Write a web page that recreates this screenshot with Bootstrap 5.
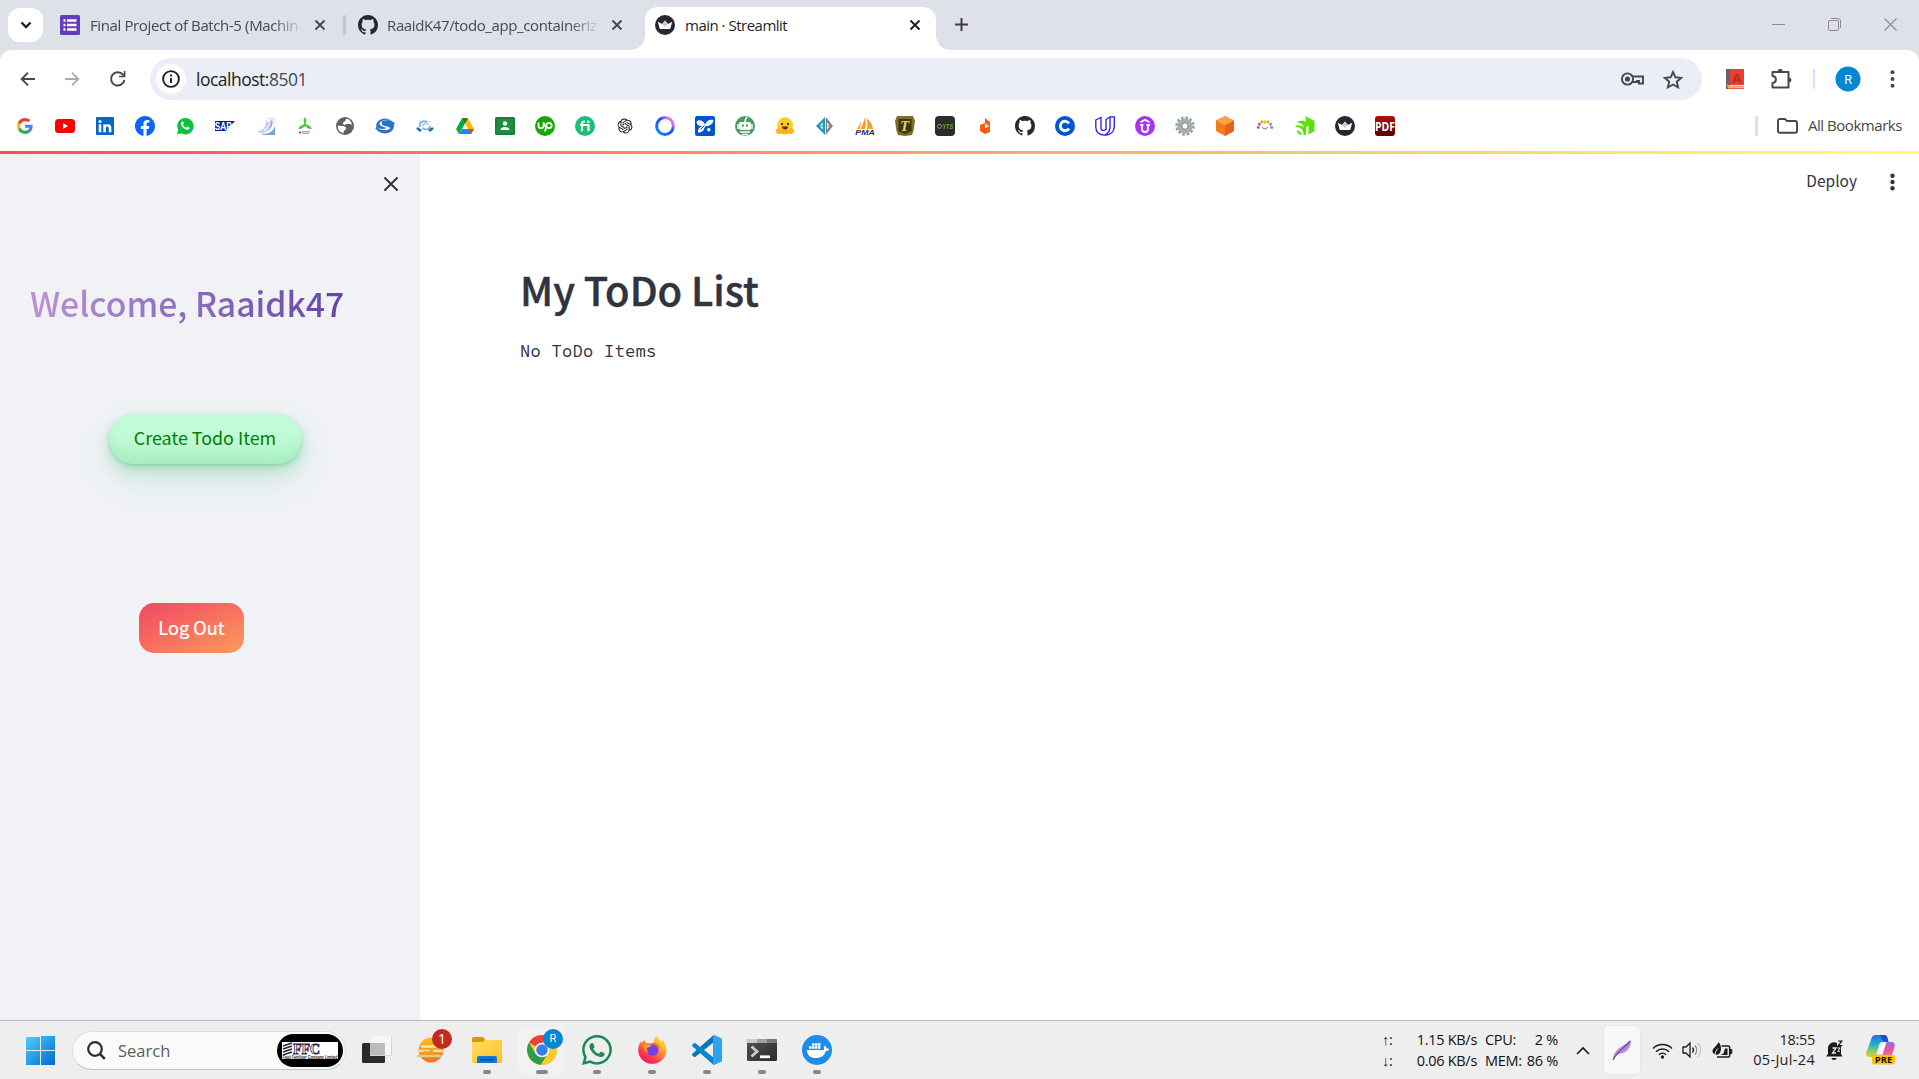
<!DOCTYPE html>
<html lang="en">
<head>
<meta charset="utf-8">
<meta name="viewport" content="width=device-width, initial-scale=1">
<title>main · Streamlit</title>
<link href="https://cdn.jsdelivr.net/npm/bootstrap@5.3.0/dist/css/bootstrap.min.css" rel="stylesheet">
<style>
:root{--ui:"Segoe UI","Open Sans","Noto Sans",sans-serif;--st:"Source Sans Pro","Noto Sans CJK SC",sans-serif}
html,body{height:100%;overflow:hidden}
body{font-family:var(--ui);color:#1f1f1f;background:#fff}
svg{display:block;flex:none;overflow:visible}
.tx{white-space:nowrap;display:block}
.strip{height:50px;background:#dee1e8;padding-left:8px}
.tabmenu{width:35px;height:34px;border-radius:12px}
.btab{height:43px;font-size:15px;letter-spacing:-.5px;color:#45484c}
.btab .tx{line-height:24px}
.tab-name{width:209px;letter-spacing:-.38px}
.fade-end{-webkit-mask-image:linear-gradient(90deg,#000 87%,rgba(0,0,0,.15));mask-image:linear-gradient(90deg,#000 87%,rgba(0,0,0,.15))}
.tab-on{position:relative;background:#fff;border-radius:13px 13px 0 0;color:#1f1f1f;width:291px}
.tab-on::before,.tab-on::after{content:"";position:absolute;bottom:0;width:14px;height:14px}
.tab-on::before{left:-14px;background:radial-gradient(circle at 0 0,transparent 13.5px,#fff 14px)}
.tab-on::after{right:-14px;background:radial-gradient(circle at 100% 0,transparent 13.5px,#fff 14px)}
.tabsep{width:3px;height:20px;background:#c6c7ca;border-radius:2px}
.under{background:#dee1e8}
.tools{height:58px;background:#fff;border-radius:12px 12px 0 0}
.omni{width:1552px;height:42px;border-radius:21px;background:#ebeef7;margin-top:8px;padding-left:6px}
.info{width:30px;height:30px}
.url{font-size:17.5px;line-height:26px;letter-spacing:-.5px}
.port{color:#474747}
.marks{height:43px;padding-left:15px;padding-bottom:7px}
.bm{width:40px}
.allbm{font-size:15px;letter-spacing:-.45px;color:#474747;margin:-2px 17px 0 10px}
.vsep{width:3px;height:20px;background:#d3e3fd;border-radius:2px}
.deco{height:3px;background:linear-gradient(90deg,#ff4b4b,#fffd80)}
.page{height:866px;font-family:var(--st);color:#31333f}
.side{width:420px;background:#f0f2f6}
.welcome{font-size:33.7px;line-height:44px;font-weight:500;background:linear-gradient(90deg,#b993d6,#6345a6);-webkit-background-clip:text;background-clip:text;color:transparent;width:316px}
.make{width:193px;height:50px;border-radius:25px;border:0;color:#008000;font-size:17.9px;background:#c2fbd7;padding:0 0 2px;box-shadow:rgba(44,187,99,.2) 0 -25px 18px -14px inset,rgba(44,187,99,.15) 0 1px 2px,rgba(44,187,99,.15) 0 2px 4px,rgba(44,187,99,.15) 0 4px 8px,rgba(44,187,99,.15) 0 8px 16px,rgba(44,187,99,.15) 0 16px 32px}
.leave{width:105px;height:50px;border-radius:15px;border:0;color:#fff;font-size:18.2px;-webkit-text-stroke:.2px #fff;background:linear-gradient(to bottom right,#ef4765,#ff9a5a)}
.headline{font-size:40px;line-height:52px;font-weight:500;margin:0;letter-spacing:-.05px;-webkit-text-stroke:.45px #31333f}
.mono{font-family:"Source Code Pro","Noto Sans Mono CJK SC","Liberation Mono",monospace;font-size:17px;letter-spacing:.3px;line-height:24px}
.deploy{font-size:15.5px;line-height:24px}
.task{height:59px;background:#eee;border-top:1px solid #b9babc}
.search{width:274px;height:39px;border-radius:20px;background:#fafafa;border:1px solid #dedede;border-bottom-color:#c2c2c2;color:#5c5c5c;font-size:16.5px}
.app{width:55px;height:58px;position:relative}
.app::after{content:"";position:absolute;left:24px;top:49px;width:8px;height:4px;border-radius:2px;background:#868686}
.app.cur::after{left:22px;width:12px}
.app.quiet::after{display:none}
.curbox{position:absolute;left:4px;top:5px;width:47px;height:48px;background:#f2f2f2;border-radius:5px}
.pin{position:absolute;width:20px;height:20px;border-radius:50%;color:#fff;font-size:14px;line-height:20px;text-align:center}
.net{font-size:14.5px;line-height:20.5px;letter-spacing:-.3px;color:#111;padding-top:1px}
.feather{width:38px;height:50px;background:#f8f8f8;border:1px solid #e6e6e6;border-radius:5px}
.clock{font-size:14.5px;line-height:20.5px;color:#222;letter-spacing:-.3px}
.clock .day{letter-spacing:.32px}
</style>
</head>
<body>
<svg width="0" height="0" class="position-absolute"><defs>
<symbol id="x" viewBox="0 0 12 12"><path d="M1.500 1.500l9 9m0-9l-9 9" stroke="currentColor" stroke-width="1.900" fill="none"/></symbol>
<symbol id="gh" viewBox="0 0 16 16"><path fill="#24292f" d="M8 0C3.58 0 0 3.58 0 8c0 3.54 2.29 6.53 5.47 7.59.4.07.55-.17.55-.38 0-.19-.01-.82-.01-1.49-2.01.37-2.53-.49-2.69-.94-.09-.23-.48-.94-.82-1.13-.28-.15-.68-.52-.01-.53.63-.01 1.08.58 1.23.82.72 1.21 1.87.87 2.33.66.07-.52.28-.87.51-1.07-1.78-.2-3.64-.89-3.64-3.95 0-.87.31-1.59.82-2.15-.08-.2-.36-1.02.08-2.12 0 0 .67-.21 2.2.82.64-.18 1.32-.27 2-.27.68 0 1.36.09 2 .27 1.53-1.04 2.2-.82 2.2-.82.44 1.1.16 1.92.08 2.12.51.56.82 1.27.82 2.15 0 3.07-1.87 3.75-3.65 3.95.29.25.54.73.54 1.48 0 1.07-.01 1.93-.01 2.2 0 .21.15.46.55.38A8.012 8.012 0 0 0 16 8c0-4.42-3.58-8-8-8z"/></symbol>
<symbol id="crown" viewBox="0 0 20 20"><circle cx="10" cy="10" r="10" fill="#262730"/><path d="M2.800 6.800l4.300 2.200L10 5.600 12.900 9l4.300-2.200-2 7.200H4.800z" fill="#fff"/><path d="M7.100 9L10 5.600 12.900 9 10 12z" fill="#c9c9cb"/></symbol>
<symbol id="wa" viewBox="0 0 16 16"><path d="M13.601 2.326A7.854 7.854 0 0 0 7.994 0C3.627 0 .068 3.558.064 7.926c0 1.399.366 2.76 1.057 3.965L0 16l4.204-1.102a7.933 7.933 0 0 0 3.79.965h.004c4.368 0 7.926-3.558 7.93-7.93A7.898 7.898 0 0 0 13.6 2.326zM7.994 14.521a6.573 6.573 0 0 1-3.356-.92l-.24-.144-2.494.654.666-2.433-.156-.251a6.56 6.56 0 0 1-1.007-3.505c0-3.626 2.957-6.584 6.591-6.584a6.56 6.56 0 0 1 4.66 1.931 6.557 6.557 0 0 1 1.928 4.66c-.004 3.639-2.961 6.592-6.592 6.592zm3.615-4.934c-.197-.099-1.17-.578-1.353-.646-.182-.065-.315-.099-.445.099-.133.197-.513.646-.627.775-.114.133-.232.148-.43.05-.197-.1-.836-.308-1.592-.985-.59-.525-.985-1.175-1.103-1.372-.114-.198-.011-.304.088-.403.087-.088.197-.232.296-.346.1-.114.133-.198.198-.33.065-.134.034-.248-.015-.347-.05-.099-.445-1.076-.612-1.47-.16-.389-.323-.335-.445-.34-.114-.007-.247-.007-.38-.007a.729.729 0 0 0-.529.247c-.182.198-.691.677-.691 1.654 0 .977.71 1.916.81 2.049.098.133 1.394 2.132 3.383 2.992.47.205.84.326 1.129.418.475.152.904.129 1.246.08.38-.058 1.171-.48 1.338-.943.164-.464.164-.86.114-.992-.049-.133-.182-.198-.38-.298z"/></symbol>
<linearGradient id="win" x1="0" y1="0" x2="1" y2="1"><stop offset="0" stop-color="#4fd0fb"/><stop offset="1" stop-color="#0069cf"/></linearGradient>
<linearGradient id="ring" x1="0" y1="1" x2="1" y2="0"><stop offset="0" stop-color="#0a8cff"/><stop offset=".6" stop-color="#1e4bff"/><stop offset=".8" stop-color="#c77df0"/><stop offset="1" stop-color="#ff6bc5"/></linearGradient>
<linearGradient id="sun" x1="0" y1="0" x2="0" y2="1"><stop offset="0" stop-color="#ffc21a"/><stop offset="1" stop-color="#f07018"/></linearGradient>
<linearGradient id="fold" x1="0" y1="0" x2="1" y2="1"><stop offset="0" stop-color="#ffdc68"/><stop offset="1" stop-color="#fdc223"/></linearGradient>
<linearGradient id="fox" x1=".9" y1="0" x2=".2" y2="1"><stop offset="0" stop-color="#fff04a"/><stop offset=".4" stop-color="#ff9a2a"/><stop offset=".75" stop-color="#ff3850"/><stop offset="1" stop-color="#e3127c"/></linearGradient>
<linearGradient id="term" x1="0" y1="0" x2="1" y2="1"><stop offset="0" stop-color="#525252"/><stop offset="1" stop-color="#2c2c2c"/></linearGradient>
<linearGradient id="shell" x1="0" y1="0" x2="1" y2="0"><stop offset="0" stop-color="#63c5e8"/><stop offset=".6" stop-color="#a9a0dc"/><stop offset="1" stop-color="#2a75c4"/></linearGradient>
<linearGradient id="copA" x1="0" y1="0" x2="0" y2="1"><stop offset="0" stop-color="#1b6fe0"/><stop offset=".45" stop-color="#22b5c8"/><stop offset=".75" stop-color="#8fd05a"/><stop offset="1" stop-color="#f2c22c"/></linearGradient>
<linearGradient id="copB" x1="0" y1="0" x2="0" y2="1"><stop offset="0" stop-color="#a05ff0"/><stop offset=".5" stop-color="#e457a8"/><stop offset="1" stop-color="#ff8a50"/></linearGradient>
<linearGradient id="pdf" x1="0" y1="0" x2="0" y2="1"><stop offset="0" stop-color="#b01010"/><stop offset="1" stop-color="#5e0000"/></linearGradient>
</defs></svg>

<!-- Tab strip -->
<header class="strip d-flex align-items-end">
  <button class="tabmenu btn bg-white border-0 p-0 d-flex align-items-center justify-content-center align-self-start mt-2" aria-label="Search tabs"><svg width="12" height="8" viewBox="0 0 12 8"><path d="M1.500 1.500L6 6l4.500-4.500" fill="none" stroke="#1f1f1f" stroke-width="2.300"/></svg></button>
  <div class="btab d-flex align-items-center pb-2" style="width:283px;padding-left:17px">
    <svg width="20" height="20"><rect width="20" height="20" rx="1.500" fill="#673ab7"/><path d="M3.500 5.500h2M3.500 10h2M3.500 14.500h2M7 5.500h9.500M7 10h9.500M7 14.500h9.500" stroke="#fff" stroke-width="2.400"/></svg>
    <span class="tx tab-name fade-end" style="margin-left:10px">Final Project of Batch-5 (Machin</span>
    <svg width="12" height="12" style="margin-left:15px"><use href="#x"/></svg>
  </div>
  <div class="btab d-flex align-items-center pb-2" style="width:319px;padding-left:17px">
    <i class="tabsep"></i>
    <svg width="20" height="20" style="margin-left:12px"><use href="#gh"/></svg>
    <span class="tx tab-name fade-end" style="margin-left:9px">RaaidK47/todo_app_containeriz</span>
    <svg width="12" height="12" style="margin-left:15px"><use href="#x"/></svg>
  </div>
  <div class="btab tab-on d-flex align-items-center pb-2" style="padding-left:10px">
    <svg width="20" height="20"><use href="#crown"/></svg>
    <span class="tx" style="margin-left:10px">main · Streamlit</span>
    <svg class="ms-auto" width="12" height="12" style="margin-right:15px"><use href="#x"/></svg>
  </div>
  <div class="btab d-flex align-items-center pb-2" style="padding-left:18.500px"><svg width="13" height="13"><path d="M6.500 0v13M0 6.500h13" stroke="#3c3e41" stroke-width="2"/></svg></div>
  <div class="btab d-flex align-items-center pb-2 ms-auto" style="padding-right:21px;gap:43px">
    <svg width="13" height="13"><path d="M0 6.500h13" stroke="#8a8c90"/></svg>
    <svg width="13" height="13"><rect x=".5" y="2.500" width="10" height="10" rx="1.500" fill="none" stroke="#8a8c90"/><path d="M3 .5h7a2.500 2.500 0 0 1 2.500 2.500v7" fill="none" stroke="#8a8c90"/></svg>
    <svg width="14" height="13"><path d="M.5.500l12 12m0-12l-12 12" stroke="#8a8c90" fill="none" stroke-width="1.100"/></svg>
  </div>
</header>

<!-- Address bar -->
<div class="under"><div class="tools d-flex align-items-start">
  <div class="d-flex align-items-center" style="width:150px;height:58px;padding-left:20px">
    <svg width="15" height="14"><path d="M15 7H1.500M8 .700L1.700 7 8 13.300" fill="none" stroke="#46484b" stroke-width="1.900"/></svg>
    <svg width="15" height="14" style="margin-left:30px"><path d="M0 7h13.500M7 .700L13.300 7 7 13.300" fill="none" stroke="#a9abae" stroke-width="1.800"/></svg>
    <svg width="16" height="16" style="margin-left:30px"><path d="M14.400 8.800A6.700 6.700 0 1 1 13 3.700l1.500 1.600" fill="none" stroke="#46484b" stroke-width="2"/><path d="M15.400 0v6.300H9V4.800h4.800V0z" fill="#46484b"/></svg>
  </div>
  <div class="omni d-flex align-items-center">
    <span class="info bg-white rounded-circle d-flex align-items-center justify-content-center"><svg width="18" height="18"><circle cx="9" cy="9" r="7.900" fill="none" stroke="#1f1f1f" stroke-width="1.900"/><path d="M9 8v5M9 4.600v2" stroke="#1f1f1f" stroke-width="1.900"/></svg></span>
    <span class="tx url" style="margin-left:10px">localhost:<span class="port">8501</span></span>
    <svg class="ms-auto" width="23" height="14" fill="none" stroke="#46484b" stroke-width="1.900"><circle cx="6.500" cy="7" r="5.600"/><circle cx="6.500" cy="7" r="2.600" fill="#46484b" stroke="none"/><path d="M11.500 4.500H22v7h-4v-2.500h-2v1h-4.500"/></svg>
    <svg width="20" height="19" style="margin:0 19.500px 0 18.500px"><path d="M10 2l2.400 5.300 5.700.6-4.300 3.800 1.300 5.700L10 14.500 4.900 17.400l1.300-5.700L1.900 7.900l5.700-.6z" fill="none" stroke="#46484b" stroke-width="1.900"/></svg>
  </div>
  <div class="d-flex align-items-center flex-grow-1" style="height:58px;padding-left:24px">
    <svg width="18" height="20"><rect width="18" height="18" fill="#e8402f"/><path d="M0 0h4v20H0z" fill="#63676b"/><path d="M4 16h14v1.500H4z" fill="#dfe7ec"/><path d="M4 18.500h14V20H4z" fill="#e8604f"/><path d="M1 15l5 3-4 2z" fill="#f5c518"/><text x="6.200" y="13.500" font-family="Open Sans" font-weight="700" font-size="13" fill="#b52d22">A</text></svg>
    <svg width="21" height="20" style="margin-left:27px" fill="none" stroke="#46484b" stroke-width="2"><path d="M1.500 3h16v15.500h-16V14c4.500-.5 4.500-6.500 0-7z" stroke-linejoin="round"/><path d="M7 2.500a2.200 2.200 0 0 1 4.400 0zM18 9a2 2 0 0 1 0 4z" fill="#46484b" stroke-width="1"/></svg>
    <i class="vsep" style="width:2px;margin-left:21px"></i>
    <svg width="26" height="26" style="margin-left:20px"><circle cx="13" cy="13" r="12.500" fill="#0288d1"/><text x="13" y="17.500" text-anchor="middle" font-family="Roboto" font-size="12.500" fill="#fff">R</text></svg>
    <svg width="5" height="18" style="margin-left:29px" fill="#46484b"><circle cx="2.500" cy="2.200" r="2"/><circle cx="2.500" cy="9" r="2"/><circle cx="2.500" cy="15.800" r="2"/></svg>
  </div>
</div></div>

<!-- Bookmarks -->
<nav class="marks d-flex align-items-center bg-white">
  <span class="bm"><svg width="20" height="20" viewBox="-6 -6 60 60"><path fill="#ea4335" d="M24 9.500c3.540 0 6.710 1.220 9.210 3.600l6.850-6.850C35.900 2.380 30.470 0 24 0 14.620 0 6.510 5.380 2.560 13.220l7.980 6.190C12.430 13.720 17.740 9.500 24 9.500z"/><path fill="#4285f4" d="M46.980 24.550c0-1.570-.15-3.090-.38-4.550H24v9.020h12.940c-.58 2.960-2.260 5.480-4.780 7.180l7.730 6c4.510-4.180 7.090-10.360 7.090-17.650z"/><path fill="#fbbc05" d="M10.530 28.590c-.48-1.450-.76-2.990-.76-4.590s.27-3.140.76-4.590l-7.980-6.190C.92 16.460 0 20.120 0 24c0 3.880.92 7.540 2.560 10.780l7.970-6.190z"/><path fill="#34a853" d="M24 48c6.480 0 11.930-2.130 15.890-5.810l-7.730-6c-2.150 1.450-4.920 2.300-8.160 2.300-6.260 0-11.570-4.220-13.470-9.910l-7.980 6.190C6.510 42.620 14.620 48 24 48z"/></svg></span>
  <span class="bm"><svg width="20" height="20"><rect y="3" width="20" height="14" rx="3.500" fill="#f00"/><path d="M8 7l5 3-5 3z" fill="#fff"/></svg></span>
  <span class="bm"><svg width="20" height="20"><rect x="1" y="1" width="18" height="18" rx="1" fill="#0a66c2"/><circle cx="5" cy="5.500" r="1.600" fill="#fff"/><path d="M3.700 8.300h2.600v8H3.700zM8.300 8.300h2.500v1.100c1-1.700 5.600-1.800 5.600 2.400v4.500h-2.600v-4c0-2.500-3-2.300-3 0v4H8.300z" fill="#fff"/></svg></span>
  <span class="bm"><svg width="20" height="20" viewBox="0 0 16 16"><path fill="#0866ff" d="M16 8.049c0-4.446-3.582-8.050-8-8.050C3.580 0-.002 3.603-.002 8.050c0 4.017 2.926 7.347 6.750 7.951v-5.625h-2.030V8.050H6.750V6.275c0-2.017 1.195-3.131 3.022-3.131.876 0 1.791.157 1.791.157v1.980h-1.009c-.993 0-1.303.621-1.303 1.258v1.510h2.218l-.354 2.326H9.250V16c3.824-.604 6.750-3.934 6.750-7.951z"/></svg></span>
  <span class="bm"><svg width="20" height="20"><path d="M2 18.500l1.200-4.400A8.200 8.200 0 1 1 6.300 17.300z" fill="#0fc143"/><path d="M7.100 5.600c-1.800.8-1.600 3.300.6 5.600s5.200 3.600 6.700 1.500l.1-1-2.200-1.100-1.200 1.200c-1.500-.6-2.600-1.700-3.200-3.100l.9-1.100-.8-2z" fill="#fff"/></svg></span>
  <span class="bm"><svg width="20" height="20"><path d="M0 5h20L10.500 15H0z" fill="#0a1f8f"/><text x="-.3" y="13.700" textLength="17" lengthAdjust="spacingAndGlyphs" font-family="Liberation Sans" font-weight="700" font-size="10" fill="#fff">SAP</text></svg></span>
  <span class="bm"><svg width="20" height="20"><path d="M10 1h10v9L14 4z" fill="#edeaf6"/><path d="M11 3c1 2 1 3 3 3.500L17 4c1 4 0 8-3 10l-4 3c-3 1-6 0-8-2 3 0 5-1 7-3 2-3 2-6 2-9z" fill="url(#shell)" opacity=".55"/><path d="M8 18c5 0 10-2 12-8v9H7z" fill="#3a80c8" opacity=".7"/><path d="M9 15c3-2 5-5 6-9" stroke="#fff" stroke-width="1.200" fill="none" opacity=".8"/></svg></span>
  <span class="bm"><svg width="20" height="20"><path d="M10 .8l1.500 3.500-.8 3.700 4.300 2 1.800 3-3.300-.3-3.500-2.500-3.500 2.500-3.300.3L5 10l4.300-2-.8-3.700z" fill="#4cc93a"/><path d="M4.500 6C5 4 6 3 7 2.500M13 2.500c1 .5 2 1.500 2.500 3.500" stroke="#bfe8ba" fill="none"/><path d="M4 15.500h2v2H4z" fill="#e33"/><path d="M7 15.700h8M7 17.300h7" stroke="#888" stroke-width=".9"/></svg></span>
  <span class="bm"><svg width="20" height="20"><circle cx="10" cy="10" r="9" fill="#5f6368"/><path d="M12 2.800c2.500.8 4.300 2.800 5 5.700-1.500 0-2-.5-3-.5-1 0-2.500-.3-3.500.5-.8.700-2.500.3-2.500-1.300 0-1.200 1.500-1.200 2-2 .4-.8.800-2.200 2-2.400z" fill="#fff"/><path d="M2.700 9.800c2 0 3.500.3 5 .3 2 0 3.300.9 3.300 2.300 0 1.800-1.800 1.600-2.200 2.600-.2.700 0 1.500-.5 2.200-3.300-.6-5.600-3.400-5.600-7.400z" fill="#fff"/></svg></span>
  <span class="bm"><svg width="20" height="20"><ellipse cx="10" cy="10" rx="9" ry="7.500" fill="#2a73c4"/><path d="M20 5.500C14 3.500 6 5 7 8.300c.8 2.300 8 1.500 8 4.200 0 2-5 2.500-9 1.500L0 13.500l1.500-3C3 13 9 13.500 11 12.300 12 11 4 11 4.500 7.500 5 4 14 2 20 5.500z" fill="#fff" opacity=".95"/><path d="M1 11.500c3 4 10 5 14 2.500M19 8.500C17 5 11 4.500 7 6.500" fill="none" stroke="#2a73c4" stroke-width="2.200"/></svg></span>
  <span class="bm"><svg width="20" height="20" fill="none"><path d="M5 11C3.500 6.500 8 4 12.500 6M7.500 12c3 2.500 7 1.500 7.500-2" stroke="#7db4e0" stroke-width="1.800"/><path d="M8 10.500C8 7 12 7 14 9M4.500 5l2 1M16 5l-2 1" stroke="#9cc6e8" stroke-width="1.300"/><path d="M2 12l4 3M18 12l-4 3" stroke="#1d6f9c" stroke-width="2.600"/></svg></span>
  <span class="bm"><svg width="20" height="20" viewBox="0 0 20 20"><path d="M7 2.200h6L10 7.500 4 18 1 13z" fill="#00ac47"/><path d="M7 2.200h6l6 10.800h-6z" fill="#ffba00"/><path d="M4 18l3-5h12l-3 5z" fill="#2684fc"/><path d="M19 13l-3 5-3-5z" fill="#ea4335"/><path d="M7 2.200L10 7.500 13 2.200z" fill="#00832d"/></svg></span>
  <span class="bm"><svg width="20" height="20"><rect y="1" width="20" height="18" rx="1.500" fill="#188038"/><rect x="2" y="3" width="16" height="14" fill="#1e8e3e"/><circle cx="10" cy="7.500" r="2.200" fill="#fff"/><path d="M5.500 14c0-4 9-4 9 0z" fill="#fff"/></svg></span>
  <span class="bm"><svg width="20" height="20"><circle cx="10" cy="10" r="10" fill="#14a800"/><path d="M3.500 6.500v3.300a2.500 2.500 0 0 0 5 0V6.500c.8 3 2 4.500 3.200 5.300M10 15.500l1.400-5.500" fill="none" stroke="#fff" stroke-width="1.800"/><circle cx="14" cy="9.500" r="2.700" fill="none" stroke="#fff" stroke-width="1.800"/></svg></span>
  <span class="bm"><svg width="20" height="20"><circle cx="10" cy="10" r="10" fill="#1dbf73"/><path d="M7 15.200V8c0-2 .8-2.700 3-2.500M5 9h8.500v6.200" fill="none" stroke="#fff" stroke-width="2.100"/><circle cx="13.300" cy="5.700" r="1.300" fill="#fff"/></svg></span>
  <span class="bm"><svg width="20" height="20" viewBox="-4 -4 32 32"><path fill="#111" d="M22.2819 9.8211a5.9847 5.9847 0 0 0-.5157-4.9108 6.0462 6.0462 0 0 0-6.5098-2.9A6.0651 6.0651 0 0 0 4.9807 4.1818a5.9847 5.9847 0 0 0-3.9977 2.9 6.0462 6.0462 0 0 0 .7427 7.0966 5.98 5.98 0 0 0 .511 4.9107 6.051 6.051 0 0 0 6.5146 2.9001A5.9847 5.9847 0 0 0 13.2599 24a6.0557 6.0557 0 0 0 5.7718-4.2058 5.9894 5.9894 0 0 0 3.9977-2.9001 6.0557 6.0557 0 0 0-.7475-7.0729zm-9.022 12.6081a4.4755 4.4755 0 0 1-2.8764-1.0408l.1419-.0804 4.7783-2.7582a.7948.7948 0 0 0 .3927-.6813v-6.7369l2.02 1.1686a.071.071 0 0 1 .038.052v5.5826a4.504 4.504 0 0 1-4.4945 4.4944zm-9.6607-4.1254a4.4708 4.4708 0 0 1-.5346-3.0137l.142.0852 4.783 2.7582a.7712.7712 0 0 0 .7806 0l5.8428-3.3685v2.3324a.0804.0804 0 0 1-.0332.0615L9.74 19.9502a4.4992 4.4992 0 0 1-6.1408-1.6464zM2.3408 7.8956a4.485 4.485 0 0 1 2.3655-1.9728V11.6a.7664.7664 0 0 0 .3879.6765l5.8144 3.3543-2.0201 1.1685a.0757.0757 0 0 1-.071 0l-4.8303-2.7865A4.504 4.504 0 0 1 2.3408 7.872zm16.5963 3.8558L13.1038 8.364 15.1192 7.2a.0757.0757 0 0 1 .071 0l4.8303 2.7913a4.4944 4.4944 0 0 1-.6765 8.1042v-5.6772a.79.79 0 0 0-.407-.667zm2.0107-3.0231l-.142-.0852-4.7735-2.7818a.7759.7759 0 0 0-.7854 0L9.409 9.2297V6.8974a.0662.0662 0 0 1 .0284-.0615l4.8303-2.7866a4.4992 4.4992 0 0 1 6.6802 4.66zM8.3065 12.863l-2.02-1.1638a.0804.0804 0 0 1-.038-.0567V6.0742a4.4992 4.4992 0 0 1 7.3757-3.4537l-.142.0805L8.704 5.459a.7948.7948 0 0 0-.3927.6813zm1.0976-2.3654l2.602-1.4998 2.6069 1.4998v2.9994l-2.5974 1.4997-2.6067-1.4997Z"/></svg></span>
  <span class="bm"><svg width="20" height="20"><circle cx="10" cy="10" r="8.400" fill="none" stroke="url(#ring)" stroke-width="3"/></svg></span>
  <span class="bm"><svg width="20" height="20"><rect width="20" height="20" rx="2" fill="#0056d2"/><path d="M1.500 6c1-3 6.500-2.500 8.500 2.500C11.500 4.500 15 3 18.500 4c-.5 3.500-3 6-7 6-1.500 0-1.500 1-2.500 3-1 2.500-3 4-6 3.500-.5-3 1.500-5.500 4.500-6.500C4 10.500 2 9 1.500 6z" fill="#fff"/><path d="M5.500 13.500l4-4" stroke="#0056d2"/><circle cx="13.800" cy="13.800" r="1.700" fill="#fff"/></svg></span>
  <span class="bm"><svg width="20" height="20"><circle cx="10" cy="10" r="10" fill="#4b9a5d"/><path d="M10 6c0-3 1-4 2-5" stroke="#fff" stroke-width="1.600" fill="none"/><rect x="4" y="6" width="12" height="8" rx="2" fill="#fff"/><path d="M7 8.500h2v2H7zM11 8.500h2v2h-2z" fill="#4b9a5d"/><path d="M3 8v5M17 8v5M5 16h10M7 18.500h6" stroke="#fff" stroke-width="1.400"/></svg></span>
  <span class="bm"><svg width="20" height="20"><circle cx="10" cy="9.300" r="8" fill="#ffce1c"/><path d="M1 15c0-3 3-4 5-1 2-1 6-1 8 0 2-3 5-2 5 1s-3 3.500-5 2.500c-2 1-6 1-8 0-2 1-5 .5-5-2.500z" fill="#ffb01f"/><circle cx="7" cy="8" r="1.200" fill="#3a3b45"/><circle cx="13" cy="8" r="1.200" fill="#3a3b45"/><path d="M7 10.500h6c0 4-6 4-6 0z" fill="#5b2333"/></svg></span>
  <span class="bm"><svg width="20" height="20"><path d="M10 1v18L1 10z" fill="#1aa0bf"/><path d="M10.800 1v18L18 10z" fill="#80868a"/><path d="M7.800 6.500v3H4.800zM7.800 10.500v3l-3-3zM12 6.500l2.500 3H12zM12 10.500h2.500l-2.500 3z" fill="#fff"/></svg></span>
  <span class="bm"><svg width="20" height="20"><path d="M10 1c1 4 1 8 0 12H5c2-3 4-7 5-12zM11.500 2c4 3 6 7 6.500 11h-6c.7-4 .7-7-.5-11zM5 5c0 3-1 6-3.500 8H4c2-3 2-5 1-8z" fill="#f89c27"/><text x=".3" y="19" textLength="19.500" lengthAdjust="spacingAndGlyphs" font-family="Liberation Sans" font-weight="700" font-style="italic" font-size="7.500" fill="#262a5c">PMA</text></svg></span>
  <span class="bm"><svg width="20" height="20"><path d="M2 0h16l2 5-1.500 10L17 19l-7 1-7-1-1.500-4L0 5z" fill="#7d6e2c"/><path d="M3.500 3h13v12L10 18l-6.500-3z" fill="#3e350e"/><text x="9.500" y="15" text-anchor="middle" font-family="Liberation Serif" font-style="italic" font-weight="700" font-size="15" fill="#e0cf78">T</text></svg></span>
  <span class="bm"><svg width="20" height="20"><rect width="20" height="20" rx="4" fill="#2b2c2c"/><circle cx="4.500" cy="10.300" r="2" fill="none" stroke="#5fb829"/><text x="7.500" y="12.600" textLength="10.500" lengthAdjust="spacingAndGlyphs" font-family="Liberation Sans" font-style="italic" font-weight="700" font-size="6.500" fill="#5fb829">YTS</text></svg></span>
  <span class="bm"><svg width="20" height="20"><path d="M10 2l5 4v10l-5 2-5-3V9l5-2z" fill="#ff5a0a"/><path d="M10 7.500l4 2.700-4 2.300z" fill="#fff"/></svg></span>
  <span class="bm"><svg width="20" height="20"><use href="#gh"/></svg></span>
  <span class="bm"><svg width="20" height="20"><circle cx="10" cy="10" r="10" fill="#0056d2"/><path d="M14 7.500a4.700 4.700 0 1 0 0 5" fill="none" stroke="#fff" stroke-width="2.900"/></svg></span>
  <span class="bm"><svg width="20" height="20" fill="none" stroke="#2015ff" stroke-width="1.300"><path d="M.8 4L6 1.500v11c0 2 2.500 2.500 5 1V3.500L15 .8h4.300V10c0 6-4 9.200-9.500 9.200S.8 16 .8 11z"/><path d="M15 1v10c0 4-2 6.500-5 8"/></svg></span>
  <span class="bm"><svg width="20" height="20"><circle cx="10" cy="10" r="10" fill="#a435f0"/><path d="M5.500 6.300L10 3.800l4.500 2.500M7 9v4c0 4 6 4 6 0V9M5 9h3.500M11.500 9H15" fill="none" stroke="#fff" stroke-width="1.800"/></svg></span>
  <span class="bm"><svg width="20" height="20"><circle cx="10" cy="10" r="8.200" fill="none" stroke="#98a2a8" stroke-width="3" stroke-dasharray="2.600 1.700"/><circle cx="10" cy="10" r="5.300" fill="none" stroke="#a4adb2" stroke-width="4.500"/><circle cx="10" cy="10" r="3.200" fill="#fff" stroke="#7c868c"/></svg></span>
  <span class="bm"><svg width="20" height="20"><path d="M10 0l9 4.500v10.500L10 20 1 15V4.500z" fill="#f47b20"/><path d="M10 0l9 4.500L10 9.500 1 4.500z" fill="#fda246"/><path d="M19 4.500V15l-9 5V9.500z" fill="#ea5f1d"/></svg></span>
  <span class="bm"><svg width="20" height="20" fill="none" stroke-width="2.300"><path d="M3.500 7.300l1.800 1.800" stroke="#e5432e"/><path d="M6.500 4.500l.8 2.700" stroke="#f7941d"/><path d="M10 4.500v3" stroke="#f9b418"/><path d="M13.500 4.500l-.8 2.700" stroke="#8cc63f"/><path d="M16.500 7.300l-1.800 1.800" stroke="#f05a7a"/><path d="M2 11.500h2.500" stroke="#2b6fd0"/><path d="M15.500 11.500H18" stroke="#1ba3dc"/><path d="M7.500 11c.5 2.500 4.500 2.500 5 0" stroke="#666" stroke-width="1"/></svg></span>
  <span class="bm"><svg width="20" height="20"><path d="M10.500 0L19.500 5v10l-6 3.500V9.500L11 11v8H8.500c0-5-2-8-8.500-8 1-2.500 6-2.500 8.500.5 0-3-2-4.500-6.500-5C4 4 9 4.500 11 6z" fill="#56e309"/><path d="M1.500 14.500c3.500 0 5 2 5 4.500-2 0-4-2-5-4.500z" fill="#56e309"/></svg></span>
  <span class="bm"><svg width="20" height="20"><use href="#crown"/></svg></span>
  <span class="bm"><svg width="20" height="20"><rect width="20" height="20" rx="3" fill="url(#pdf)"/><text x="0" y="14.500" textLength="20" lengthAdjust="spacingAndGlyphs" font-family="Open Sans" font-weight="700" font-size="11.500" fill="#fff">PDF</text></svg></span>
  <i class="vsep ms-auto"></i>
  <svg width="21" height="16" style="margin-left:19px"><path d="M1 3.500V13a1.800 1.800 0 0 0 1.800 1.800h15.400A1.800 1.800 0 0 0 20 13V4.800A1.800 1.800 0 0 0 18.200 3H10L8 1H2.800A1.800 1.800 0 0 0 1 2.800z" fill="none" stroke="#46484b" stroke-width="1.900"/></svg>
  <span class="tx allbm">All Bookmarks</span>
</nav>

<!-- Streamlit page -->
<div class="deco"></div>
<main class="page d-flex">
  <aside class="side d-flex flex-column">
    <div class="d-flex justify-content-end" style="padding:21.500px 21.500px 0 0"><svg width="16" height="16"><path d="M2 2l12 12M14 2L2 14" stroke="#31333f" stroke-width="2" stroke-linecap="round"/></svg></div>
    <div style="padding:89.500px 0 0 30px"><span class="tx welcome">Welcome, Raaidk47</span></div>
    <div style="padding:88.500px 0 0 108.500px"><button class="make">Create Todo Item</button></div>
    <div style="padding:139.500px 0 0 139px"><button class="leave p-0">Log Out</button></div>
  </aside>
  <section class="flex-grow-1 d-flex flex-column">
    <div class="d-flex justify-content-end align-items-start" style="padding:14px 24px 0 0"><span class="tx deploy">Deploy</span><svg width="5" height="18" style="margin:4.500px 0 0 33px" fill="#31333f"><circle cx="2.500" cy="2.700" r="2.200"/><circle cx="2.500" cy="9" r="2.200"/><circle cx="2.500" cy="15.300" r="2.200"/></svg></div>
    <div style="padding:71px 0 0 100px">
      <h1 class="headline">My ToDo List</h1>
      <p class="mono mb-0" style="padding-top:24px">No ToDo Items</p>
    </div>
  </section>
</main>

<!-- Taskbar -->
<footer class="task d-flex align-items-center">
  <svg width="29" height="29" style="margin-left:26px"><path d="M0 1h14v13H0zM15 0h14v14H15zM0 15h14v14H0zM15 15h14v14H15z" fill="url(#win)"/></svg>
  <div class="search d-flex align-items-center" style="margin-left:17px;padding-left:14px">
    <svg width="19" height="19"><circle cx="8" cy="8" r="6.800" fill="none" stroke="#2b2b2b" stroke-width="2.200"/><path d="M12.800 12.800l5 5" stroke="#2b2b2b" stroke-width="2.600"/></svg>
    <span class="tx" style="margin:2px 0 0 12px">Search</span>
    <svg class="ms-auto" width="66" height="33" style="margin-right:2px"><rect width="66" height="33" rx="16.500" fill="#000"/><rect x="5" y="8" width="56" height="17" fill="#fff"/><path d="M6 12l9-3M6 15l9-3M6 18l9-3M6 21l9-3" stroke="#2c2350" stroke-width="1.800"/><text x="16" y="19.500" textLength="27" font-family="Liberation Serif" font-weight="700" font-size="14" fill="#fff" stroke="#2c2350" stroke-width=".8">FFC</text><text x="5.500" y="24.500" textLength="55" lengthAdjust="spacingAndGlyphs" font-family="Liberation Sans" font-weight="700" font-size="4.500" fill="#222">Fauji Fertilizer Company Limited</text></svg>
  </div>
  <svg width="30" height="28" style="margin-left:16px"><rect y="7" width="23" height="20" rx="1.500" fill="#2b2b29"/><rect x="8" width="21.500" height="19.500" rx="1.500" fill="#f6f6f6"/><path d="M8 7h15v12.500H8z" fill="#bcbcbb"/><path d="M8 19.500h21.500V1" fill="none" stroke="#d5d5d5"/></svg>
  <div class="app quiet d-flex align-items-center justify-content-center" style="margin-left:12px">
    <svg width="28" height="26" style="margin-right:3px"><circle cx="15" cy="13" r="12.500" fill="url(#sun)"/><g stroke-linecap="round" stroke-width="2.600"><path d="M6 9.500h14" stroke="#f7e6ae"/><path d="M2 14h11M18 14h8" stroke="#eedfae"/><path d="M2 19h22" stroke="#dccb95"/><path d="M8 15.500h8" stroke="#f5a31c"/></g></svg>
    <span class="pin" style="left:28px;top:8px;background:#c42b1c">1</span>
  </div>
  <div class="app d-flex align-items-center justify-content-center"><svg width="30" height="26"><path d="M0 1.500A1.500 1.500 0 0 1 1.500 0H11l2 2.500V8H0z" fill="#dc9a00"/><path d="M0 5h11l2-2h17v23H0z" fill="url(#fold)"/><path d="M5 26v-5a2 2 0 0 1 2-2h16a2 2 0 0 1 2 2v5z" fill="#1377d1"/><path d="M8.500 22.700h13" stroke="#0a4a94" stroke-width="1.500"/></svg></div>
  <div class="app cur d-flex align-items-center justify-content-center"><i class="curbox"></i>
    <svg class="position-relative" width="30" height="30" viewBox="0 0 30 30"><circle cx="15" cy="15" r="15" fill="#fcc934"/><path d="M15 15L2 7.500A15 15 0 0 1 28 7.500H15z" fill="#ea4335"/><path d="M8.500 18.750L2 7.500A15 15 0 0 0 13.500 29.900L21 18.500z" fill="#2d9d4a"/><path d="M28 7.500H15v7.500l6.500 3.750L15 30A15 15 0 0 0 28 7.500z" fill="#fcc934"/><circle cx="15" cy="15" r="7.300" fill="#fff"/><circle cx="15" cy="15" r="5.800" fill="#3b7ded"/></svg>
    <span class="pin" style="left:29px;top:8px;background:#0288d1;font-size:11px;font-family:Roboto">R</span></div>
  <div class="app d-flex align-items-center justify-content-center"><svg width="30" height="30" fill="#1f8a56"><use href="#wa"/></svg></div>
  <div class="app d-flex align-items-center justify-content-center"><svg width="29" height="30" viewBox="0 0 29 30" style="margin-left:1px"><path d="M18 1c2 1 4 4 5 6 1-1 1-2 1-3 3 3 4.500 8 4.500 12A14.200 14 0 0 1 .2 16C0 12 1 9 3 6v3c1-2 2-3 3.500-4 0 2 1 3 3 3 3 0 4 0 6 1 0-3 1-6 2.500-8z" fill="url(#fox)"/><circle cx="14.500" cy="15" r="6" fill="#7a3fe0"/><path d="M5 9c4 0 5 1 9 1-1 2-4 2-5 3 0 2 0 4 2 5-4-1-6-4-6-9z" fill="#ff9a1e"/><path d="M13 8c4-1 8 2 9 5l-4-2z" fill="#ff6a2c"/></svg></div>
  <div class="app d-flex align-items-center justify-content-center"><svg width="30" height="30" viewBox="0 0 30 30"><path d="M22 7L3.500 21.800a1.500 1.500 0 0 1-1.600 0L.4 20.500a1.200 1.200 0 0 1 0-1.700L21 .5z" fill="#0d74bd"/><path d="M22 23L3.500 8.200a1.500 1.500 0 0 0-1.600 0L.4 9.500a1.200 1.200 0 0 0 0 1.700L21 29.500z" fill="#0a83d0"/><path d="M22.300 0L29 3.200a1.800 1.800 0 0 1 1 1.600v20.400a1.800 1.800 0 0 1-1 1.600L22.300 30c-1 0-1.300-.5-1.300-1.500v-27C21 .5 21.300 0 22.300 0z" fill="#2aa4ee"/></svg></div>
  <div class="app d-flex align-items-center justify-content-center"><svg width="30" height="22"><rect width="30" height="22" rx="1.500" fill="url(#term)"/><path d="M0 4V1.500A1.500 1.500 0 0 1 1.500 0H10v4z" fill="#c9c9c9"/><path d="M10 0h10v4H10z" fill="#a0a0a0"/><path d="M20 0h8.500A1.500 1.500 0 0 1 30 1.500V4H20z" fill="#787878"/><path d="M4.500 7.500l5.500 5-5.500 5" fill="none" stroke="#c9c9c9" stroke-width="2.800"/><path d="M13 17.800h10" stroke="#fff" stroke-width="2.800"/></svg></div>
  <div class="app d-flex align-items-center justify-content-center"><svg width="30" height="30"><circle cx="15" cy="15" r="15" fill="#1d8ceb"/><path d="M5 15h17c.3-1 .2-2.300-.3-3.300l1-1c1.200.7 1.800 1.600 2 2.800 1-.2 2 0 2.800.5-.8 1.500-2 2-3.500 2-2 5-5 7-10 7-5.500 0-9-2.500-9-8z" fill="#fff"/><path d="M7 11.300h2.500v2.500H7zM10 11.300h2.500v2.500H10zM13 11.300h2.500v2.500H13zM16 11.300h2.500v2.500H16zM10 8.300h2.500v2.500H10zM13 8.300h2.500v2.500H13zM16 8.300h2.500v2.500H16z" fill="#fff"/></svg></div>
  <div class="net d-flex ms-auto" style="gap:8px">
    <div style="width:26px;padding-left:1px"><span class="tx">↑:</span><span class="tx">↓:</span></div>
    <div class="text-end" style="width:62px"><span class="tx">1.15 KB/s</span><span class="tx">0.06 KB/s</span></div>
    <div style="width:73px"><div class="d-flex justify-content-between"><span class="tx">CPU:</span><span class="tx">2 %</span></div><div class="d-flex justify-content-between"><span class="tx">MEM:</span><span class="tx">86 %</span></div></div>
  </div>
  <svg width="14" height="9" style="margin-left:18px"><path d="M1 8l6-6 6 6" fill="none" stroke="#1b1b1b" stroke-width="1.700"/></svg>
  <div class="feather d-flex align-items-center justify-content-center" style="margin-left:13px"><svg width="20" height="22"><path d="M1 21C0 14 8 8 12 6c4-2 6-4 7-5 0 5-2 10-6 12-3 2-8 1-10 5z" fill="#b48ada"/><path d="M1 21C5 13 12 9 18 2" stroke="#6f3fa4" stroke-width="1.200" fill="none"/></svg></div>
  <svg width="21" height="17" style="margin-left:11px" fill="none" stroke="#1b1b1b" stroke-width="1.500"><path d="M1 6.500a13.500 13.500 0 0 1 19 0M4 9.700a9.300 9.300 0 0 1 13 0M7 12.700a5 5 0 0 1 7 0"/><circle cx="10.500" cy="15" r="1.700" fill="#1b1b1b" stroke="none"/></svg>
  <svg width="21" height="18" style="margin-left:9px" fill="none" stroke="#1b1b1b" stroke-width="1.300"><path d="M1 6h3l4-4v14l-4-4H1z"/><path d="M10.500 6.500a4 4 0 0 1 0 5"/><path d="M13 4.500a7 7 0 0 1 0 9" stroke="#888"/><path d="M15.800 2a10 10 0 0 1 0 14" stroke="#c4c4c4"/></svg>
  <svg width="21" height="17" style="margin-left:9px"><path d="M9.500 4h6.700A1.500 1.500 0 0 1 17.700 5.500v8a1.500 1.500 0 0 1-1.500 1.500H5" fill="none" stroke="#1b1b1b" stroke-width="1.500"/><path d="M18 7.500h1.800v4H18z" fill="#1b1b1b" stroke="#1b1b1b"/><path d="M8.500 13l3-1.500 1.500-5h2.500V13z" fill="#1b1b1b"/><path d="M1 11c-2-5 3-5 5.500-11C9.500 3 10 9 7 12c-2 1.500-4 .8-6-1z" fill="#1b1b1b"/><path d="M3 13C3 10.500 4 8.500 6 6.500" stroke="#eee" fill="none"/></svg>
  <div class="clock text-end" style="margin-left:18px;width:64px"><span class="tx">18:55</span><span class="tx day">05-Jul-24</span></div>
  <svg width="18" height="20" style="margin-left:11px"><path d="M2 14V8a6 6 0 0 1 9-5v3h4v8l1.500 2.500H0z" fill="#1b1b1b"/><path d="M5.500 18h5a2.500 2 0 0 1-5 0z" fill="#1b1b1b"/><path d="M6.500 8h3.500l-3.500 5H10" fill="none" stroke="#eee" stroke-width="1.300"/><path d="M12.300 1.200h3.500l-3.500 4.500h4" fill="none" stroke="#1b1b1b" stroke-width="1.300"/><path d="M11.500 8h2.500l-2.300 3.300H14" fill="none" stroke="#eee"/></svg>
  <svg width="30" height="30" style="margin:0 23px 0 22px"><path d="M6 2C7 .5 8 0 10 0h8c2 0 3 1 3.500 3l1 4h-6c-2 0-3 1-3.500 3L10.500 19c-.6 2-1.500 3-3.500 3H4c-3 0-4.500-2-3.500-5z" fill="url(#copA)"/><path d="M14 0h4c2 0 3 1 3.500 3l1 4h-5z" fill="#1746b8" opacity=".75"/><path d="M17 7h8c3 0 4.500 2 3.500 5l-3 9c-.5 2-2 3-4 3h-11c1.500-.5 2.300-1.500 2.800-3.500z" fill="url(#copB)"/><path d="M13 18l3-9c.5-1.500 1-2 2.500-2h2l-3.500 11c-.3 1.500-1 2-2 2z" fill="#fff"/><rect x="6" y="20" width="23" height="9.500" rx="2" fill="#ffc200"/><text x="17.500" y="28.200" text-anchor="middle" font-family="Open Sans" font-weight="700" font-size="9.500" fill="#111">PRE</text></svg>
</footer>
<script src="https://cdn.jsdelivr.net/npm/bootstrap@5.3.0/dist/js/bootstrap.bundle.min.js"></script>
</body>
</html>
